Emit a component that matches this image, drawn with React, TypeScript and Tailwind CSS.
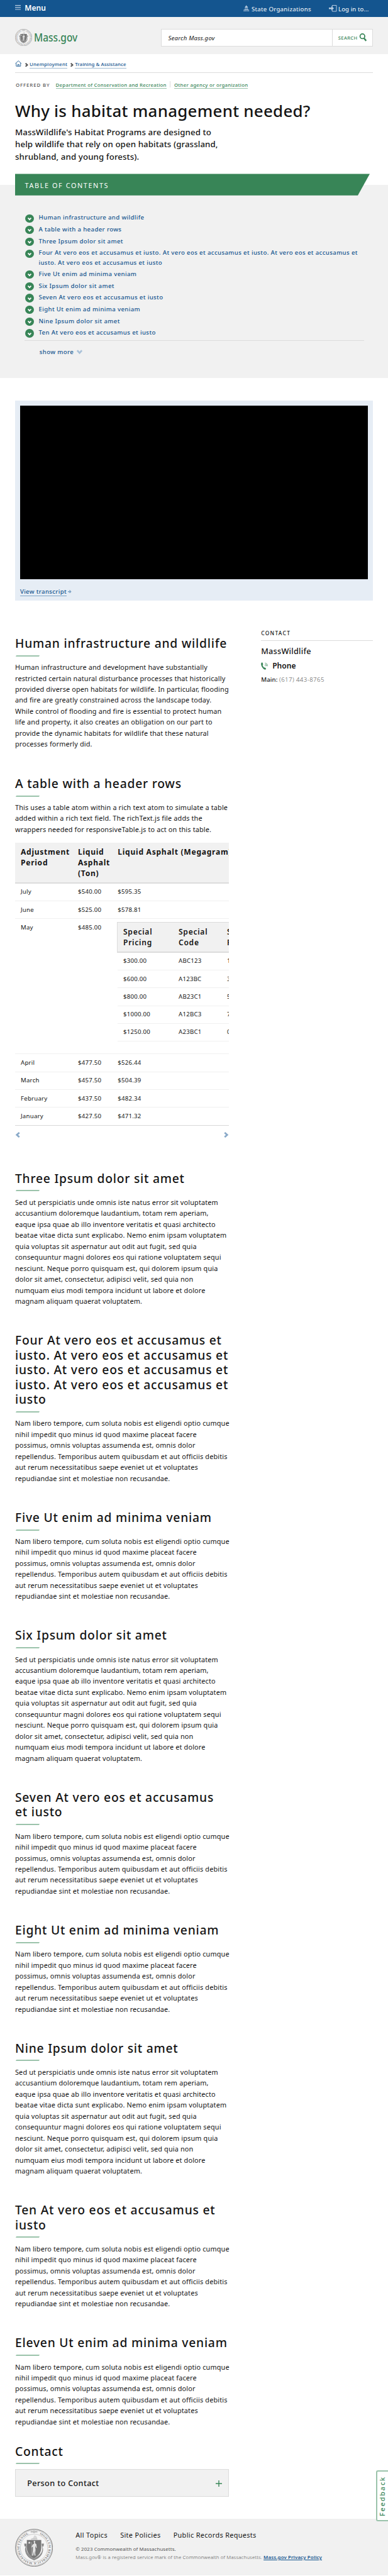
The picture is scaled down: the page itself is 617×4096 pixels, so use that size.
import React from "react";

const TOC = [
  ["Human infrastructure and wildlife"],
  ["A table with a header rows"],
  ["Three Ipsum dolor sit amet"],
  [
    "Four At vero eos et accusamus et iusto. At vero eos et accusamus et iusto. At vero eos et accusamus et",
    "iusto. At vero eos et accusamus et iusto",
  ],
  ["Five Ut enim ad minima veniam"],
  ["Six Ipsum dolor sit amet"],
  ["Seven At vero eos et accusamus et iusto"],
  ["Eight Ut enim ad minima veniam"],
  ["Nine Ipsum dolor sit amet"],
  ["Ten At vero eos et accusamus et iusto"],
];

const HUMAN = [
  "Human infrastructure and development have substantially",
  "restricted certain natural disturbance processes that historically",
  "provided diverse open habitats for wildlife. In particular, flooding",
  "and fire are greatly constrained across the landscape today.",
  "While control of flooding and fire is essential to protect human",
  "life and property, it also creates an obligation on our part to",
  "provide the dynamic habitats for wildlife that these natural",
  "processes formerly did.",
];

const TABLE_INTRO = [
  "This uses a table atom within a rich text atom to simulate a table",
  "added within a rich text field. The richText.js file adds the",
  "wrappers needed for responsiveTable.js to act on this table.",
];

const SED = [
  "Sed ut perspiciatis unde omnis iste natus error sit voluptatem",
  "accusantium doloremque laudantium, totam rem aperiam,",
  "eaque ipsa quae ab illo inventore veritatis et quasi architecto",
  "beatae vitae dicta sunt explicabo. Nemo enim ipsam voluptatem",
  "quia voluptas sit aspernatur aut odit aut fugit, sed quia",
  "consequuntur magni dolores eos qui ratione voluptatem sequi",
  "nesciunt. Neque porro quisquam est, qui dolorem ipsum quia",
  "dolor sit amet, consectetur, adipisci velit, sed quia non",
  "numquam eius modi tempora incidunt ut labore et dolore",
  "magnam aliquam quaerat voluptatem.",
];

const NAM = [
  "Nam libero tempore, cum soluta nobis est eligendi optio cumque",
  "nihil impedit quo minus id quod maxime placeat facere",
  "possimus, omnis voluptas assumenda est, omnis dolor",
  "repellendus. Temporibus autem quibusdam et aut officiis debitis",
  "aut rerum necessitatibus saepe eveniet ut et voluptates",
  "repudiandae sint et molestiae non recusandae.",
];

const SECTIONS: { title: string[]; body: string[] }[] = [
  { title: ["Three Ipsum dolor sit amet"], body: SED },
  {
    title: [
      "Four At vero eos et accusamus et",
      "iusto. At vero eos et accusamus et",
      "iusto. At vero eos et accusamus et",
      "iusto. At vero eos et accusamus et",
      "iusto",
    ],
    body: NAM,
  },
  { title: ["Five Ut enim ad minima veniam"], body: NAM },
  { title: ["Six Ipsum dolor sit amet"], body: SED },
  { title: ["Seven At vero eos et accusamus", "et iusto"], body: NAM },
  { title: ["Eight Ut enim ad minima veniam"], body: NAM },
  { title: ["Nine Ipsum dolor sit amet"], body: SED },
  { title: ["Ten At vero eos et accusamus et", "iusto"], body: NAM },
  { title: ["Eleven Ut enim ad minima veniam"], body: NAM },
];

function Lines({ lines }: { lines: string[] }) {
  return (
    <>
      {lines.map((l, i) => (
        <span key={i} className="block">
          {l}
        </span>
      ))}
    </>
  );
}

function Heading({ lines }: { lines: string[] }) {
  return (
    <>
      <h2 className="text-[19.3px] leading-[23.5px] font-medium tracking-[0.76px] text-[#141414]">
        <Lines lines={lines} />
      </h2>
      <svg className="mt-[7.3px] ml-[1.2px] block h-[2px] w-[38px]" viewBox="0 0 38 2" preserveAspectRatio="none">
        <path d="M1 0H38L37 2H0Z" fill="#9bc3ab" />
      </svg>
    </>
  );
}

function Para({ lines }: { lines: string[] }) {
  return (
    <p className="mt-[8.4px] text-[10.85px] leading-[17.475px] tracking-[0.158px]">
      <Lines lines={lines} />
    </p>
  );
}

function Seal({ className }: { className: string }) {
  return (
    <svg className={className} viewBox="0 0 100 100">
      <circle cx="50" cy="50" r="49" fill="#f5f5f5" stroke="#777" strokeWidth="1.6" />
      <circle cx="50" cy="50" r="46.6" fill="none" stroke="#777" strokeWidth="0.7" />
      <circle cx="50" cy="50" r="36" fill="none" stroke="#999" strokeWidth="1.4" strokeDasharray="1 0.8" />
      <path id="ring" d="M50 11.5A38.500 38.500 0 1 1 49.900 11.500" fill="none" />
      <text fill="#777" fontSize="8.2" fontFamily="Liberation Serif, serif" fontWeight="700">
        <textPath href="#ring" startOffset="15" textLength="212">
          SIGILLUM REIPUBLICÆ MASSACHUSETTENSIS.
        </textPath>
      </text>
      <path d="M41 8h6M53 8h6" stroke="#777" strokeWidth="1.6" />
      <circle cx="50" cy="8" r="2.2" fill="none" stroke="#777" strokeWidth="1.2" />
      <path d="M43 27q6-3 8-10l3 1q5 4 4 9z" fill="#d8d8d8" />
      <path d="M42 27h17" stroke="#999" strokeWidth="1.4" strokeDasharray="2.500 1" />
      <path
        d="M30 39h-6l1 7 3 1q-4 9 1 19 5 11 21 17 16-6 21-17 5-10 1-19l3-1 1-7h-6l1 8q2 8-2 16-5 9-18 14-13-5-18-14-4-8-2-16z"
        fill="#868686"
      />
      <path d="M30 44q-4 13 2 22 6 9 18 13 12-4 18-13 6-9 2-22" fill="none" stroke="#d5d5d5" strokeWidth="1" strokeDasharray="2 1.500" />
      <path d="M31 29.500H69V51Q68 69 50 77.500Q32 69 31 51Z" fill="#777" />
      <path d="M37.500 33l1 2.500h2.500l-2 1.700.8 2.600-2.300-1.600-2.300 1.600.8-2.600-2-1.700h2.500z" fill="#f5f5f5" />
      <path
        d="M49 32.500q3-2 4 1l-1 4 4 3 1 9-2 1-1-6-1 5 1 6-1 8 1 7h-3l-1-12-2 12h-3l2-15v-9l-3 3-1-2 4-7 3-1z"
        fill="#e4e4e4"
      />
      <path d="M43.500 35v36" stroke="#c5c5c5" strokeWidth="1" />
    </svg>
  );
}

function Chevron({ className, d }: { className: string; d: string }) {
  return (
    <svg className={className} viewBox="0 0 10 10" fill="none" stroke="currentColor" strokeWidth="3">
      <path d={d} />
    </svg>
  );
}

const RIGHT = "M2.500 1L7 5L2.500 9";
const LEFT = "M7.500 1L3 5L7.500 9";
const DOWN = "M1 2.500L5 7L9 2.500";

function Row({ cells, last }: { cells: string[]; last?: boolean }) {
  return (
    <div
      className={
        "grid h-[28.3px] grid-cols-[91px_63.3px_1fr] border-b pt-[4.7px] pl-[9px] leading-[17px] " +
        (last ? "border-[#d8d8d8]" : "border-[#f0f0f0]")
      }
    >
      {cells.map((c) => (
        <span key={c}>{c}</span>
      ))}
    </div>
  );
}

function Cell({ lines }: { lines: string[] }) {
  return (
    <div>
      <Lines lines={lines} />
    </div>
  );
}

function PriceTable() {
  return (
    <div className="mt-[12.600px] w-[340px] overflow-hidden text-[9.64px] tracking-[0.24px]">
      <div className="grid h-[64.7px] grid-cols-[91px_63.3px_1fr] border-b-2 border-[#dcdcdc] bg-[#f1f1f1] pt-[7.1px] pl-[9px] text-[12.05px] leading-[16.9px] font-bold tracking-[0.74px] whitespace-nowrap">
        <Cell lines={["Adjustment", "Period"]} />
        <Cell lines={["Liquid", "Asphalt", "(Ton)"]} />
        <Cell lines={["Liquid Asphalt (Megagram)"]} />
      </div>
      <Row cells={["July", "$540.00", "$595.35"]} />
      <Row cells={["June", "$525.00", "$578.81"]} />
      <div className="grid h-[215.1px] grid-cols-[91px_62px_1fr] border-b border-[#f0f0f0] pt-[4.5px] pl-[9px] leading-[17px]">
        <span>May</span>
        <span>$485.00</span>
        <div className="w-[230px]">
          <div className="grid h-[49px] grid-cols-[88px_77px_1fr] border-t border-b-2 border-l border-[#dcdcdc] bg-[#f1f1f1] pt-[7.1px] pl-[9px] text-[12.05px] leading-[16.9px] font-semibold tracking-[0.74px]">
            <Cell lines={["Special", "Pricing"]} />
            <Cell lines={["Special", "Code"]} />
            <Cell lines={["Special", "Price"]} />
          </div>
          {[
            ["$300.00", "ABC123", "1"],
            ["$600.00", "A123BC", "3"],
            ["$800.00", "AB23C1", "5"],
            ["$1000.00", "A12BC3", "7"],
            ["$1250.00", "A23BC1", "0"],
          ].map((r) => (
            <div
              key={r[0]}
              className="ml-px grid h-[28.3px] grid-cols-[88px_77px_1fr] border-b border-[#f0f0f0] pt-[4.5px] pl-[9px]"
            >
              {r.map((c) => (
                <span key={c}>{c}</span>
              ))}
            </div>
          ))}
        </div>
      </div>
      <Row cells={["April", "$477.50", "$526.44"]} />
      <Row cells={["March", "$457.50", "$504.39"]} />
      <Row cells={["February", "$437.50", "$482.34"]} />
      <Row cells={["January", "$427.50", "$471.32"]} last />
    </div>
  );
}

export default function App() {
  return (
    <div className="relative h-[4096px] w-[617px] overflow-hidden bg-white font-['Noto_Sans',sans-serif] whitespace-nowrap text-[#141414]">
      <div className="flex h-[26.5px] items-center bg-[#14558f] px-6 text-white">
        <svg className="mt-[-2px] h-[8px] w-[9px]" viewBox="0 0 9 8" fill="#b8cbe0">
          <path d="M0 0h9v1.200H0zM0 3.200h9v1.200H0zM0 6.400h9v1.200H0z" />
        </svg>
        <span className="ml-[6.3px] text-[12.05px] font-semibold">Menu</span>
        <svg className="mt-[-1px] ml-auto h-[10.500px] w-[9.500px]" viewBox="0 0 19 21" fill="#b8cbe0">
          <path d="M9 0h1v2.500Q14 4 14 8H5Q5 4 9 2.500zM4 9h11v1.500H4zM5 11.500h2v3H5zM8.500 11.500h2v3h-2zM12 11.500h2v3h-2zM1 14.500h17V16H1zM1 17h2.500v2.500H1zM5 17h2.500v2.500H5zM9 17h2v2.500H9zM12.500 17h2v2.500h-2zM16 17h2v2.500h-2zM0 19.500h19V21H0z" />
        </svg>
        <span className="ml-[3.2px] w-[123.2px] pt-[3px] text-[9.64px] tracking-[0.31px]">State Organizations</span>
        <svg className="h-[10.500px] w-[12.500px]" viewBox="0 0 25 21" fill="none">
          <path d="M10.500 6V1H24V20H10.500V15" stroke="#b8cbe0" strokeWidth="2" />
          <path d="M0 8h8V3.500l8 7-8 7V13H0z" fill="#b8cbe0" />
        </svg>
        <span className="mr-[6.5px] ml-[2.4px] pt-[3px] text-[9.64px] tracking-[0.1px]">Log in to...</span>
      </div>

      <header className="flex h-[59.7px] items-center bg-[#f1f1f1] px-6 pt-[6.600px]">
        <Seal className="h-[27.200px] w-[27.200px]" />
        <span className="mt-[-2px] ml-[3px] w-[202px] origin-left scale-x-[0.885] text-[17.5px] leading-6 font-medium text-[#388557]">
          Mass.gov
        </span>
        <div className="ml-auto flex h-[28px] w-[337.5px] items-stretch border border-[#dcdcdc] bg-white">
          <div className="flex flex-1 items-center pt-[2.800px] pl-[10.5px] text-[9.64px] tracking-[0.22px] italic">
            Search Mass.gov
          </div>
          <div className="flex w-[64px] items-center border-l border-[#dcdcdc] pl-[8.8px] text-[#388557]">
            <span className="pt-[1.400px] text-[7.5px] font-medium tracking-[0.4px]">SEARCH</span>
            <svg className="ml-[2.6px] h-[12.500px] w-[12.500px]" viewBox="0 0 20 20" fill="none" stroke="currentColor">
              <circle cx="8.500" cy="7.500" r="6" strokeWidth="2.800" />
              <path d="M12.500 12.500L18 19" strokeWidth="3.800" />
            </svg>
          </div>
        </div>
      </header>

      <div className="mx-6 flex h-[30px] items-start border-b border-[#dcdcdc] pt-[11.2px] text-[7.83px] leading-[10.2px] font-medium tracking-[0.18px] text-[#14558f]">
        <svg className="mt-[-1px] mr-[4px] h-[10px] w-[10.500px]" viewBox="0 0 21 20" fill="none" stroke="currentColor" strokeWidth="1.700">
          <path d="M1 10L10.500 1.500L20 10M3.500 8.500V18.500H17.500V8.500M8.500 18.500V13H12.500V18.500" />
        </svg>
        <Chevron className="mt-[2.2px] mr-[2px] h-[6.500px] w-[6.500px] text-[#535353]" d={RIGHT} />
        <a className="border-b border-[#a1bbd2]">Unemployment</a>
        <Chevron className="mt-[2.2px] mr-[2px] ml-[3.5px] h-[6.500px] w-[6.500px] text-[#535353]" d={RIGHT} />
        <a className="border-b border-[#a1bbd2] tracking-[0.07px]">Training &amp; Assistance</a>
      </div>

      <div className="mx-6 mt-[13.6px] flex h-[11.2px] text-[7.83px] leading-[10.2px] font-medium tracking-[0.26px] text-[#388557]">
        <span className="w-[64.6px] pl-[1px] tracking-[0.9px] text-[#535353]">OFFERED BY</span>
        <a className="border-b border-[#9bc3ab]">Department of Conservation and Recreation</a>
        <span className="mx-[5.600px] mt-[-1px] h-[10px] w-px bg-[#dcdcdc]" />
        <a className="border-b border-[#9bc3ab]">Other agency or organization</a>
      </div>

      <div className="mx-6 h-[153.5px] pt-[18.8px]">
        <h1 className="text-[25.9px] leading-[32px] font-medium tracking-[0.27px]">Why is habitat management needed?</h1>
        <p className="mt-[9.2px] text-[13.25px] leading-[19.3px] font-medium tracking-[0.11px]">
          <Lines
            lines={[
              "MassWildlife's Habitat Programs are designed to",
              "help wildlife that rely on open habitats (grassland,",
              "shrubland, and young forests).",
            ]}
          />
        </p>
      </div>

      <section className="h-[306.1px] bg-[#f1f1f1] px-6">
        <div className="flex">
          <div className="mt-[-18.1px] h-[34.3px] w-[564px] bg-[#388557] pt-[12.1px] pl-[15.6px] text-[10.85px] leading-[14px] tracking-[1.6px] text-white [clip-path:polygon(0_0,100%_0,calc(100%-19px)_100%,0_100%)]">
            TABLE OF CONTENTS
          </div>
        </div>
        <ul className="mt-[27.8px] flex flex-col gap-[3.4px] text-[9.64px] leading-[15.07px] font-medium tracking-[0.37px] text-[#14558f]">
          {TOC.map((t) => (
            <li key={t[0]} className="flex pl-[16.400px]">
              <span className="mt-[2.1px] mr-[7.9px] flex h-[13.2px] w-[13.2px] shrink-0 items-center justify-center rounded-full bg-[#388557] text-white">
                <Chevron className="mt-[1px] h-[6px] w-[6px]" d={DOWN} />
              </span>
              <span>
                <Lines lines={t} />
              </span>
            </li>
          ))}
        </ul>
        <div className="mx-[14.500px] mt-[3.9px] border-t border-[#dcdcdc] pt-[10.1px] pl-[24.3px]">
          <span className="flex items-center text-[9.64px] leading-[15.07px] font-medium tracking-[0.37px] text-[#14558f]">
            show more
            <Chevron className="ml-[4.5px] h-[9px] w-[9px] text-[#a9c1d8]" d={DOWN} />
          </span>
        </div>
      </section>

      <section className="mx-6 mt-[36.1px] h-[318.8px] bg-[#e6edf5] p-[7.9px]">
        <div className="h-[276.600px] bg-black" />
        <div className="mt-[12.500px] flex text-[9.64px] leading-[13.4px] font-medium tracking-[0.35px] text-[#14558f]">
          <a className="border-b border-[#7fa4c7]">View transcript</a>
          <svg className="mt-[4px] ml-[2.2px] h-[5.500px] w-[5.500px]" viewBox="0 0 10 10" fill="none" stroke="#7fa4c7" strokeWidth="2.500">
            <path d="M0 5H8M4.500 1L8.500 5L4.500 9" />
          </svg>
        </div>
      </section>

      <div className="mx-6 flex justify-between">
        <main className="w-[340px] pt-[55.400px]">
          <Heading lines={["Human infrastructure and wildlife"]} />
          <Para lines={HUMAN} />
          <div className="h-[42.050px]" />
          <Heading lines={["A table with a header rows"]} />
          <Para lines={TABLE_INTRO} />
          <PriceTable />
          <div className="mt-[10.8px] mb-[52.200px] flex h-[9px] justify-between text-[#8aaac9]">
            <Chevron className="h-[9px] w-[9px]" d={LEFT} />
            <Chevron className="h-[9px] w-[9px]" d={RIGHT} />
          </div>
          <div className="flex flex-col gap-[41.650px]">
            {SECTIONS.map((s) => (
              <section key={s.title[0]}>
                <Heading lines={s.title} />
                <Para lines={s.body} />
              </section>
            ))}
          </div>
          <div className="mt-[26.2px]">
            <Heading lines={["Contact"]} />
            <div className="mt-[8.2px] flex h-[43.400px] items-center justify-between border border-[#dcdcdc] bg-[#f1f1f1] pr-[10.5px] pl-[18.200px]">
              <span className="text-[12.65px] font-medium tracking-[0.37px]">Person to Contact</span>
              <svg className="mt-[2px] h-[10px] w-[10px]" viewBox="0 0 10 10" stroke="#388557" strokeWidth="1.400">
                <path d="M0 5H10M5 0V10" />
              </svg>
            </div>
          </div>
        </main>

        <aside className="w-[177.800px] pt-[45.8px]">
          <h3 className="border-b border-[#dcdcdc] pb-[4.4px] text-[8.44px] leading-[12px] font-medium tracking-[1.3px]">
            CONTACT
          </h3>
          <p className="mt-[8px] text-[12.65px] leading-[16px] font-medium tracking-[0.27px]">MassWildlife</p>
          <p className="mt-[8.8px] flex items-center text-[12.05px] leading-[16px] font-semibold">
            <svg className="mr-[6.8px] h-[12px] w-[11.200px]" viewBox="0 0 22 24">
              <path
                d="M1.500 1.500Q4-.5 5 2L6.500 6Q7 7.500 5 8.500 5 13 9.500 17 11 15.500 12.500 17L15.500 19.500Q17 21 14.500 23 10 25 5 18 0 11 0 6 0 3 1.500 1.500Z"
                fill="#388557"
              />
              <g fill="none" stroke="#388557" strokeWidth="1.500">
                <path d="M12 9.500Q14 10 14 12.500" />
                <path d="M12.500 5.800Q17.500 7 17.500 12.500" />
                <path d="M13 2Q21 4 21 12.500" />
              </g>
            </svg>
            Phone
          </p>
          <p className="mt-[6.5px] text-[9.64px] leading-[14px]">
            <span className="font-medium tracking-[0.15px]">Main:</span>{" "}
            <span className="font-light tracking-[0.42px] text-[#535353]">(617) 443-8765</span>
          </p>
        </aside>
      </div>

      <footer className="mt-[35px] flex h-[90px] bg-[#f1f1f1] px-6">
        <Seal className="mt-[15.7px] h-[60.300px] w-[60.300px]" />
        <div className="ml-[36px] pt-[19px]">
          <nav className="flex gap-[20.200px] text-[10.85px] leading-[14px] tracking-[0.36px]">
            <span>All Topics</span>
            <span>Site Policies</span>
            <span>Public Records Requests</span>
          </nav>
          <div className="mt-[9.6px] text-[7.83px] leading-[12.6px] text-[#535353]">
            <p className="tracking-[0.12px]">© 2023 Commonwealth of Massachusetts.</p>
            <p className="font-light tracking-[0.15px]">
              Mass.gov® is a registered service mark of the Commonwealth of Massachusetts.{" "}
              <a className="font-semibold text-[#14558f] underline">Mass.gov Privacy Policy</a>
            </p>
          </div>
        </div>
      </footer>

      <div className="absolute top-[3928.300px] right-0 flex h-[80.800px] w-[19.200px] items-center justify-center rounded-l-[3px] border-2 border-r-0 border-[#9bc3ab] bg-white">
        <span className="rotate-180 text-[10.85px] leading-[14px] font-medium tracking-[1.85px] text-[#388557] [writing-mode:vertical-rl]">
          Feedback
        </span>
      </div>
    </div>
  );
}
